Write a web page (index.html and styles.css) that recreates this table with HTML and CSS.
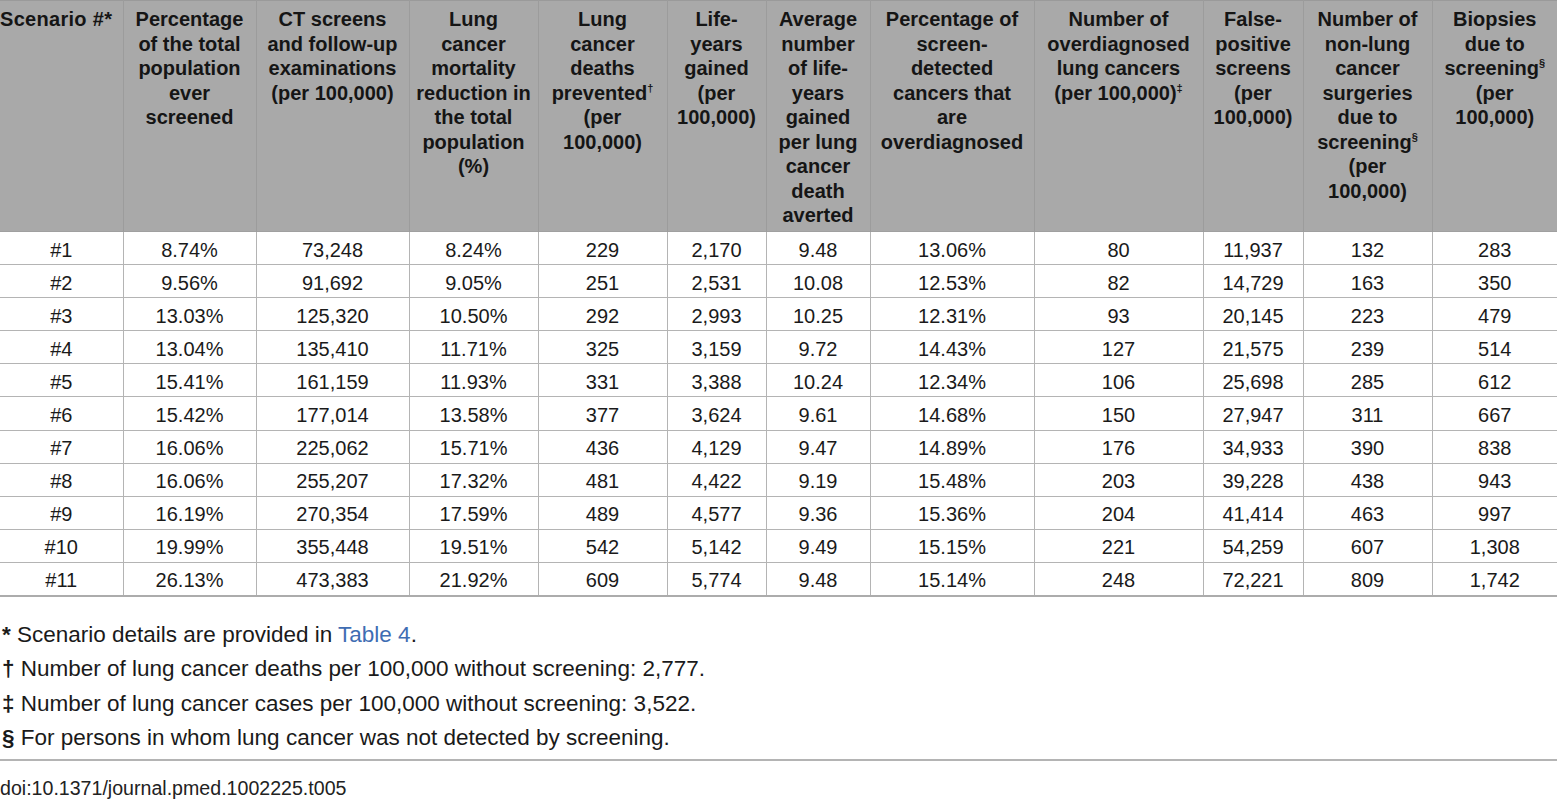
FILE: index.html
```html
<!DOCTYPE html>
<html lang="en">
<head>
<meta charset="utf-8">
<title>Table 5</title>
<link rel="stylesheet" href="styles.css">
</head>
<body>
<div class="page">
<table class="data">
<colgroup>
<col style="width:123px"><col style="width:133px"><col style="width:153px"><col style="width:129px"><col style="width:129px"><col style="width:99px"><col style="width:104px"><col style="width:164px"><col style="width:169px"><col style="width:100px"><col style="width:129px"><col style="width:125px">
</colgroup>
<thead>
<tr>
<th class="first">Scenario #*</th>
<th>Percentage of the total population ever screened</th>
<th>CT screens and follow-up examinations (per 100,000)</th>
<th>Lung cancer mortality reduction in the total population (%)</th>
<th>Lung cancer deaths prevented<sup>†</sup> (per 100,000)</th>
<th>Life-years gained (per 100,000)</th>
<th>Average number of life-years gained per lung cancer death averted</th>
<th>Percentage of screen-detected cancers that are overdiagnosed</th>
<th>Number of overdiagnosed lung cancers (per 100,000)<sup>‡</sup></th>
<th>False-positive screens (per 100,000)</th>
<th>Number of non-lung cancer surgeries due to screening<sup>§</sup> (per 100,000)</th>
<th>Biopsies due to screening<sup>§</sup> (per 100,000)</th>
</tr>
</thead>
<tbody>
<tr><td>#1</td><td>8.74%</td><td>73,248</td><td>8.24%</td><td>229</td><td>2,170</td><td>9.48</td><td>13.06%</td><td>80</td><td>11,937</td><td>132</td><td>283</td></tr>
<tr><td>#2</td><td>9.56%</td><td>91,692</td><td>9.05%</td><td>251</td><td>2,531</td><td>10.08</td><td>12.53%</td><td>82</td><td>14,729</td><td>163</td><td>350</td></tr>
<tr><td>#3</td><td>13.03%</td><td>125,320</td><td>10.50%</td><td>292</td><td>2,993</td><td>10.25</td><td>12.31%</td><td>93</td><td>20,145</td><td>223</td><td>479</td></tr>
<tr><td>#4</td><td>13.04%</td><td>135,410</td><td>11.71%</td><td>325</td><td>3,159</td><td>9.72</td><td>14.43%</td><td>127</td><td>21,575</td><td>239</td><td>514</td></tr>
<tr><td>#5</td><td>15.41%</td><td>161,159</td><td>11.93%</td><td>331</td><td>3,388</td><td>10.24</td><td>12.34%</td><td>106</td><td>25,698</td><td>285</td><td>612</td></tr>
<tr><td>#6</td><td>15.42%</td><td>177,014</td><td>13.58%</td><td>377</td><td>3,624</td><td>9.61</td><td>14.68%</td><td>150</td><td>27,947</td><td>311</td><td>667</td></tr>
<tr><td>#7</td><td>16.06%</td><td>225,062</td><td>15.71%</td><td>436</td><td>4,129</td><td>9.47</td><td>14.89%</td><td>176</td><td>34,933</td><td>390</td><td>838</td></tr>
<tr><td>#8</td><td>16.06%</td><td>255,207</td><td>17.32%</td><td>481</td><td>4,422</td><td>9.19</td><td>15.48%</td><td>203</td><td>39,228</td><td>438</td><td>943</td></tr>
<tr><td>#9</td><td>16.19%</td><td>270,354</td><td>17.59%</td><td>489</td><td>4,577</td><td>9.36</td><td>15.36%</td><td>204</td><td>41,414</td><td>463</td><td>997</td></tr>
<tr><td>#10</td><td>19.99%</td><td>355,448</td><td>19.51%</td><td>542</td><td>5,142</td><td>9.49</td><td>15.15%</td><td>221</td><td>54,259</td><td>607</td><td>1,308</td></tr>
<tr><td>#11</td><td>26.13%</td><td>473,383</td><td>21.92%</td><td>609</td><td>5,774</td><td>9.48</td><td>15.14%</td><td>248</td><td>72,221</td><td>809</td><td>1,742</td></tr>
</tbody>
</table>
<div class="notes">
<p><b>*</b> Scenario details are provided in <a class="link">Table 4</a>.</p>
<p><b>†</b> Number of lung cancer deaths per 100,000 without screening: 2,777.</p>
<p><b>‡</b> Number of lung cancer cases per 100,000 without screening: 3,522.</p>
<p><b>§</b> For persons in whom lung cancer was not detected by screening.</p>
</div>
<div class="doi">doi:10.1371/journal.pmed.1002225.t005</div>
</div>
</body>
</html>
```
FILE: styles.css
```css
html, body {
  margin: 0;
  padding: 0;
  background: #ffffff;
}
body {
  font-family: "Liberation Sans", Arial, Helvetica, sans-serif;
  color: #1a1a1a;
}
.page {
  width: 1557px;
}
.data {
  width: 1557px;
  table-layout: fixed;
  border-collapse: collapse;
}
.data thead th {
  background: #a9a9a9;
  font-size: 20px;
  font-weight: bold;
  line-height: 24.5px;
  text-align: center;
  vertical-align: top;
  padding: 6px 6px 0;
  height: 231px;
  border-left: 1px solid #9c9c9c;
  border-right: 1px solid #9c9c9c;
  border-top: 1px solid #9a9a9a;
  color: #151515;
  box-sizing: border-box;
}
.data thead th.first {
  text-align: left;
  padding-left: 0;
  padding-right: 0;
  border-left: none;
  letter-spacing: 0.3px;
}
.data thead th:last-child {
  border-right: none;
}
.data sup {
  font-size: 11px;
  line-height: 0;
  vertical-align: 8px;
}
.data tbody td {
  box-sizing: border-box;
  font-size: 20px;
  line-height: 23px;
  text-align: center;
  vertical-align: middle;
  padding: 4px 0 0;
  height: 33.1px;
  border: 1px solid #b4b4b4;
  color: #1a1a1a;
}
.data tbody td:first-child {
  border-left: none;
}
.data tbody td:last-child {
  border-right: none;
}
.data tbody tr:first-child td {
  border-top: 1px solid #a0a0a0;
}
.data tbody tr:last-child td {
  border-bottom: 2px solid #acacac;
}
.notes {
  margin-top: 21px;
}
.notes p {
  margin: 0;
  font-size: 22.5px;
  line-height: 34.5px;
  padding-left: 2px;
}
.notes b {
  font-weight: bold;
}
.link {
  color: #3f6db3;
}
.doi {
  margin-top: 3px;
  border-top: 2px solid #b4b4b4;
  padding-top: 15px;
  font-size: 19.6px;
  line-height: 24px;
  color: #222;
}
```
